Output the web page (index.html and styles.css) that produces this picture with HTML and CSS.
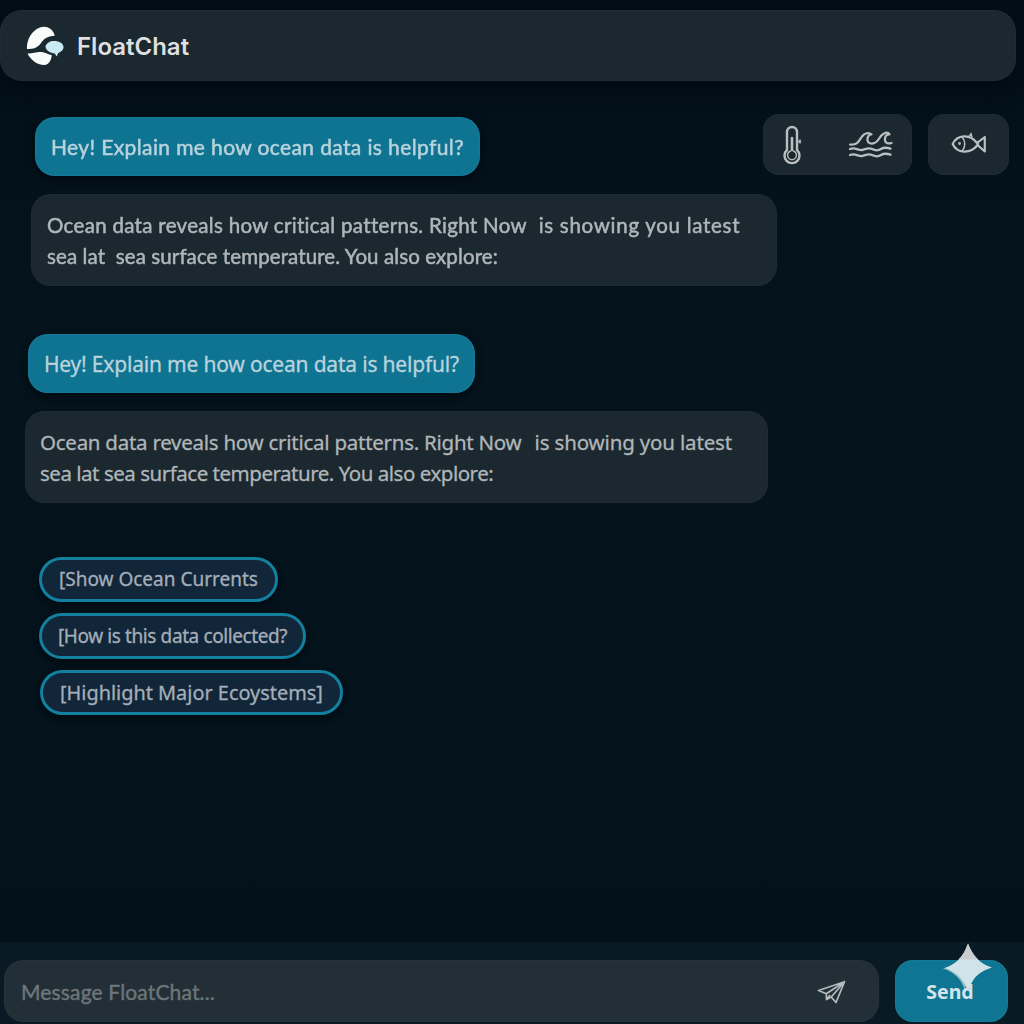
FILE: index.html
```html
<!DOCTYPE html>
<html lang="en">
<head>
<meta charset="utf-8">
<title>FloatChat</title>
<link rel="stylesheet" href="styles.css">
</head>
<body>
<div class="app">
  <header class="header">
    <svg class="logo" viewBox="0 0 38 40" width="38" height="40">
      <path fill="#fafcfc" d="M1 23C.5 11.500 8.500 1 18 .7C24 .8 28 5 28.700 9.800C21 10.500 17.800 13 15 17C11.500 22 7.500 23 1 23Z"/>
      <path fill="#fafcfc" d="M1.500 27.500C8 27.300 11 25.500 16 26c4 .5 6 2.700 9.700 2.900C25.500 34 23 38.700 18.500 39C11 39.200 4.500 33.500 1.500 27.500Z"/>
      <path fill="#c9eaf0" d="M19.500 20.500c1-3.500 4.500-5.500 8.500-5.500c5.500 0 9.500 2.600 9.500 6c0 3-2.500 4.800-5.200 6l-1.600 3.500l-1.900-3C24.500 27 20 25 19.500 20.500Z"/>
    </svg>
    <h1 class="brand">FloatChat</h1>
  </header>

  <main class="chat">
    <div class="top-row">
      <div class="bubble user soft first"><span>Hey! Explain me how ocean data is helpful?</span></div>
      <div class="tools">
        <div class="tool-group">
          <svg class="icon" viewBox="0 0 22 40" width="22" height="40">
            <path stroke-width="2.400" d="M5 25V7a5 5 0 0 1 10 0V25a7.500 7.500 0 1 1-10 0Z"/>
            <path stroke-width="2.600" d="M10 13V25"/>
            <path stroke-width="1.400" d="M8.500 26a4.500 4.500 0 1 0 3 0"/>
            <path stroke-width="1.500" d="M15 16.500h3.500M18 15v3"/>
          </svg>
          <svg class="icon waves" viewBox="0 0 44 28" width="44" height="28">
            <path stroke-width="2.200" d="M1 13.500C8 14.500 10 10 13 5.500C15.500 2 20 1 22.500 3.300C20 3.200 18 6 18.500 9.500c.4 3 4 3.600 7 2.500C30 10.500 30 5 35 2.500c2-1 4.500-.9 5.500.8C37.500 3 35.500 6 36 9.500c.4 2.800 3.500 3.500 6.500 2.500"/>
            <path stroke-width="2.300" d="M1 18c5-2 8.500 1.500 12 1s6-3 10-1s6 2 9 0s6-1.500 9.500-.3M1 24c5-2 8.500 1.500 12 1s6-3 10-1s6 2 9 0s6-1.500 9.500-.3"/>
          </svg>
        </div>
        <div class="tool-group single">
          <svg class="icon" viewBox="0 0 36 24" width="36" height="24">
            <path stroke-width="2.200" d="M1.700 12C6 2.500 19 1.500 26 11L33.800 5V19.500L26.500 13C19 22.500 6 21.500 1.700 12Z"/>
            <path stroke-width="1.500" d="M11.500 5.800C14.500 9 14.500 15 11.500 18.500M17.500 4.500l1.500-1l1-2l.8 3.500M24.500 9l3 3l-3 3.500"/>
            <circle cx="8.500" cy="11.500" r=".8" stroke-width="1.200"/>
          </svg>
        </div>
      </div>
    </div>
    <div class="bubble bot soft second"><span class="line a">Ocean data reveals how critical patterns. Right Now&nbsp; <span class="tail">is showing you latest</span></span><span class="line b">sea lat&nbsp; sea surface temperature. You also explore:</span></div>
    <div class="bubble user third"><span>Hey! Explain me how ocean data is helpful?</span></div>
    <div class="bubble bot fourth"><span class="line a">Ocean data reveals how critical patterns. Right Now&nbsp; <span class="tail">is showing you latest</span></span><span class="line b">sea lat sea surface temperature. You also explore:</span></div>
    <div class="suggestions">
      <button class="chip currents"><span>[Show Ocean Currents</span></button>
      <button class="chip collected"><span>[How is this data collected?</span></button>
      <button class="chip ecosystems"><span>[Highlight Major Ecoystems]</span></button>
    </div>
  </main>

  <footer class="composer">
    <div class="input"><span>Message FloatChat...</span>
      <svg class="plane" viewBox="0 0 30 24" width="30" height="24">
        <path d="M1.500 10.500L27.500 1.700L19 22.500L14.200 17L9.500 19.500L9.300 13.700ZM9.300 13.700L27.500 1.700L14.200 17M9.500 19.500L13 15"/>
      </svg>
    </div>
    <button class="send"><span>Send</span>
      <svg class="sparkle" viewBox="0 0 50 50" width="50" height="50">
        <path fill="#8db9c6" d="M24 2C21 13 13 22 0 25.500C11 29 18 36 21.500 46L27 30Z"/>
        <path fill="#cfe3e9" d="M25 .5C29 12 37 21 49 24.500C38 28 30 34 27 44C26 47 24 47 23 44C19 35 13 29 2 25C14 21 22 12 25 .5Z"/>
        <path fill="#cacdcf" d="M25 .5C27.500 7 30.500 12 35 16.500H15.500C20 12 23 7 25 .5Z"/>
      </svg>
    </button>
  </footer>
</div>
</body>
</html>
```
FILE: styles.css
```css
* { box-sizing: border-box; }
body { margin: 0; background: #04121b; font-family: "Noto Sans", "Open Sans", sans-serif; }
.app { height: 1024px; overflow: hidden; padding-top: 10px; display: flex; flex-direction: column; background: linear-gradient(#020f18, #04131c 30%, #04131c 75%, #03101a); }
.header { flex: none; width: 1016px; height: 71px; border-radius: 22px; background: #1b282f; box-shadow: inset 0 0 2px #29373e, 0 8px 20px #010a11; display: flex; align-items: center; padding-left: 26px; }
.logo { margin-right: 13px; }
.brand { margin: 0; padding-top: 2px; font: 600 24px/30px Inter, sans-serif; color: #dddfe0; }
.chat { flex: 1; padding-top: 33px; display: flex; flex-direction: column; align-items: flex-start; }
.top-row { width: 100%; display: flex; justify-content: space-between; padding-right: 15px; }
.bubble { border-radius: 20px; white-space: nowrap; display: flex; flex-direction: column; justify-content: center; -webkit-text-stroke: .3px currentColor; }
.user { height: 59px; background: #0f7492; box-shadow: inset 0 0 2px #2489a5, 0 3px 10px #010a10; color: #b9d3dc; font-size: 21px; line-height: 30px; padding-left: 16px; }
.bot { height: 92px; background: #1b282f; box-shadow: inset 0 0 2px #29373e; color: #afb6b9; font-size: 20.5px; line-height: 30.500px; padding: 1px 0 0 15px; }
.soft { font-family: Lato, sans-serif; -webkit-text-stroke-width: .5px; }
.soft > span { filter: blur(.7px); }
.first { width: 445px; margin: 3px 0 0 35px; letter-spacing: .38px; }
.second { width: 746px; margin: 18px 0 0 31px; padding-left: 16px; }
.second .a { letter-spacing: .31px; }
.second .tail { margin-left: 1px; letter-spacing: .72px; }
.second .b { letter-spacing: .1px; }
.third { width: 447px; margin: 48px 0 0 28px; letter-spacing: -.19px; }
.fourth { width: 743px; margin: 18px 0 0 25px; }
.fourth .a { letter-spacing: -.26px; }
.fourth .tail { margin-left: 3px; letter-spacing: -.16px; }
.fourth .b { letter-spacing: -.48px; }
.tools { display: flex; gap: 16px; }
.tool-group { width: 149px; height: 61px; border-radius: 16px; background: #1b282f; box-shadow: inset 0 0 2px #29373e; display: flex; align-items: center; justify-content: space-between; padding: 0 19px; }
.tool-group.single { width: 81px; padding: 0 0 1px; justify-content: center; }
.icon { fill: none; stroke: #b9bec0; stroke-linecap: round; stroke-linejoin: round; }
.suggestions { margin: 54px 0 0 39px; display: flex; flex-direction: column; align-items: flex-start; gap: 11px; }
.chip { height: 45px; border: 3px solid #12809e; border-radius: 23px; background: #12263a; color: #a4aeb8; font: 19px/28px "Noto Sans", sans-serif; padding: 0 0 1px 17px; text-align: left; white-space: nowrap; box-shadow: 0 3px 8px #010a10; -webkit-text-stroke: .3px currentColor; }
.currents { width: 239px; }
.collected { width: 267px; height: 46px; padding-left: 16px; padding-bottom: 0; letter-spacing: -.4px; }
.ecosystems { width: 303px; margin-left: 1px; padding-bottom: 0; font-size: 19.900px; }
.composer { flex: none; height: 82px; background: #0a1a24; display: flex; gap: 16px; padding: 18px 16px 0 4px; }
.input { width: 875px; height: 62px; border-radius: 20px; background: #232f36; box-shadow: inset 0 0 2px #334047; color: #6c767b; font: 21px/30px Lato, sans-serif; letter-spacing: .15px; -webkit-text-stroke: .4px currentColor; display: flex; align-items: center; justify-content: space-between; padding: 2px 32px 0 17px; }
.plane { fill: none; stroke: #b5babd; stroke-width: 1.700; stroke-linejoin: round; }
.send { position: relative; width: 113px; height: 62px; border: 0; border-radius: 18px; background: #0f7592; box-shadow: inset 0 0 2px #2489a5; color: #d3e4ea; font: 700 19.500px/30px "Noto Sans", sans-serif; padding: 2px 3px 0 0; }
.sparkle { position: absolute; left: 48px; top: -17px; }
```
